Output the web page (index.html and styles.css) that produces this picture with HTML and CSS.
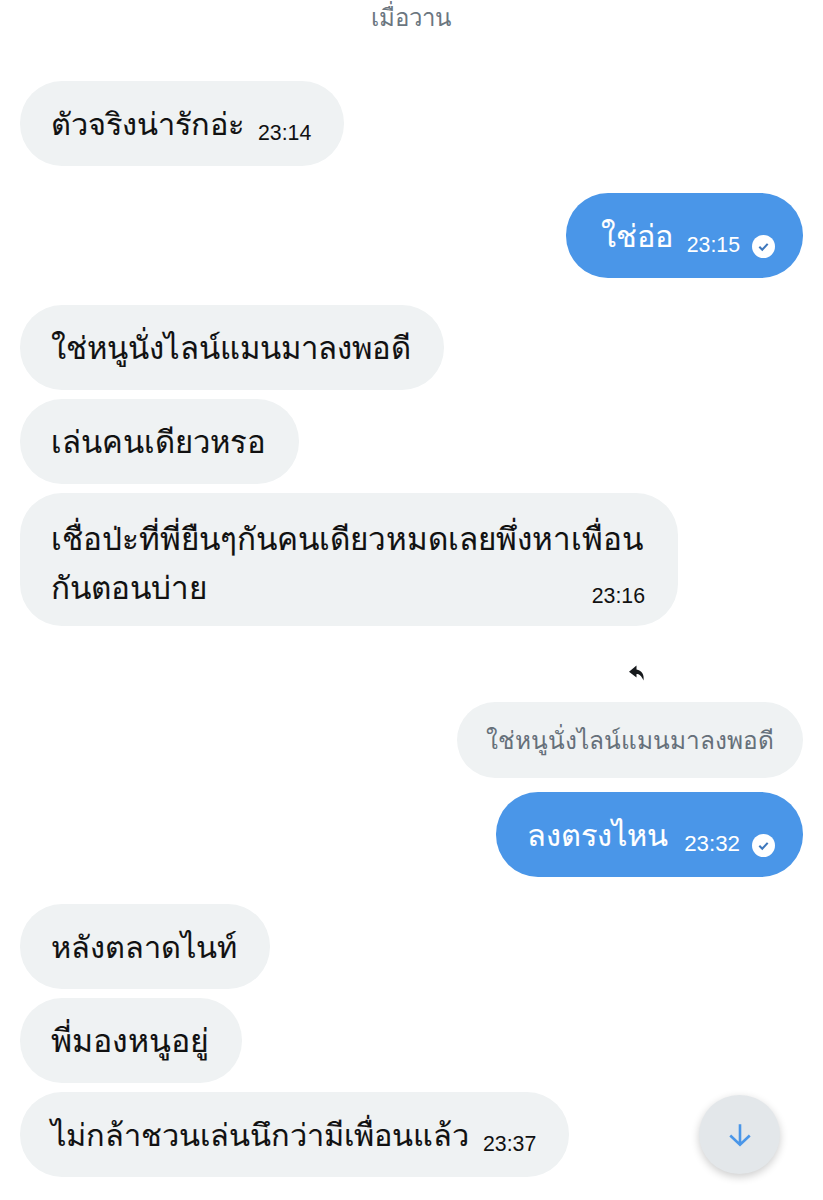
FILE: index.html
```html
<!DOCTYPE html>
<html lang="th">

<head>
    <meta charset="UTF-8">
    <meta name="viewport" content="width=device-width, initial-scale=1.0">
    <title>แชท</title>
    <link rel="stylesheet" href="styles.css">
</head>

<body>

    <div class="chat">
        <div class="day-label">เมื่อวาน</div>

        <div class="group">
            <div class="bubble in">
                <span class="text">ตัวจริงน่ารักอ่ะ</span>
                <span class="time">23:14</span>
            </div>
        </div>

        <div class="group">
            <div class="bubble out short">
                <span class="text">ใช่อ่อ</span>
                <span class="time">23:15</span>
                <svg class="tick" viewBox="0 0 22 22"><circle cx="11" cy="11" r="11" fill="#fff"/><path d="M7 11.3l2.8 2.8 5.2-5.6" fill="none" stroke="#3f78bd" stroke-width="2"/></svg>
            </div>
        </div>

        <div class="group">
            <div class="bubble in">
                <span class="text text-lg">ใช่หนูนั่งไลน์แมนมาลงพอดี</span>
            </div>
            <div class="bubble in">
                <span class="text text-lg">เล่นคนเดียวหรอ</span>
            </div>
            <div class="bubble in wrap">
                <div class="text">เชื่อป่ะที่พี่ยืนๆกันคนเดียวหมดเลยพึ่งหาเพื่อน<br>กันตอนบ่าย</div>
                <div class="time">23:16</div>
            </div>
        </div>

        <div class="reply-mark">
            <svg class="reply-icon" viewBox="0 0 16 16"><path d="M7.5 0.5L0 6.8 7.5 12.5V9c2.8 0 4.8 1.6 7 6.5 1-6-2-10.4-7-11z" fill="#16191c"/></svg>
        </div>

        <div class="group">
            <div class="quote">ใช่หนูนั่งไลน์แมนมาลงพอดี</div>
            <div class="bubble out answer">
                <span class="text">ลงตรงไหน</span>
                <span class="time">23:32</span>
                <svg class="tick" viewBox="0 0 22 22"><circle cx="11" cy="11" r="11" fill="#fff"/><path d="M7 11.3l2.8 2.8 5.2-5.6" fill="none" stroke="#3f78bd" stroke-width="2"/></svg>
            </div>
        </div>

        <div class="group">
            <div class="bubble in">
                <span class="text">หลังตลาดไนท์</span>
            </div>
            <div class="bubble in">
                <span class="text text-xl">พี่มองหนูอยู่</span>
            </div>
            <div class="bubble in">
                <span class="text">ไม่กล้าชวนเล่นนึกว่ามีเพื่อนแล้ว</span>
                <span class="time">23:37</span>
            </div>
        </div>

        <button class="scroll-down">
            <svg viewBox="0 0 24 24"><path d="M12 2v19M3 12.5L12 21l9-8.5" fill="none" stroke="#4a96e8" stroke-width="2.4"/></svg>
        </button>
    </div>

</body>

</html>
```

FILE: styles.css
```css
body {
    margin: 0;
    background-color: #fff;
    font-family: "Noto Sans", "Liberation Sans", sans-serif;
    color: #111;
}

.chat {
    position: relative;
    height: 1200px;
    padding: 0 20px;
    box-sizing: border-box;
    overflow: hidden;
}

.day-label {
    height: 33px;
    line-height: 33px;
    text-align: center;
    font-size: 24px;
    padding-right: 2px;
    color: #6b7680;
}

.group {
    display: flex;
    flex-direction: column;
    gap: 9.5px;
    margin-top: 27.5px;
}

.group:nth-child(2) {
    margin-top: 48px;
}

.bubble {
    display: flex;
    align-items: center;
    align-self: flex-start;
    box-sizing: border-box;
    height: 84.5px;
    padding: 0 33px 0 31px;
    border-radius: 42px;
    background-color: #eff2f3;
    font-size: 30.7px;
}

.bubble .text {
    padding-top: 3px;
    -webkit-text-stroke: 0.12px currentColor;
}

.bubble .text-lg {
    padding-top: 1px;
    font-size: 31px;
}

.bubble .text-xl {
    padding-top: 1px;
    font-size: 32px;
}

.bubble.out {
    align-self: flex-end;
    background-color: #4a96e8;
    color: #fff;
    padding: 0 28px 0 31px;
}

.bubble.short {
    padding-left: 35px;
}

.bubble.wrap {
    display: block;
    width: 658px;
    height: 133px;
    padding-top: 17px;
    font-size: 31.4px;
}

.wrap .text {
    line-height: 49px;
    white-space: nowrap;
}

.wrap .time {
    margin: -27px 0 0;
    text-align: right;
}

.time {
    align-self: flex-end;
    margin: 0 0 20px 14px;
    font-family: "Liberation Sans", sans-serif;
    font-size: 21.3px;
}

.answer .time {
    margin-left: 16px;
    font-size: 22.3px;
}

.tick {
    align-self: flex-end;
    width: 23px;
    height: 23px;
    margin: 0 0 20px 12px;
}

.reply-mark {
    display: flex;
    justify-content: flex-end;
    height: 18px;
    margin-top: 39px;
    padding-right: 158px;
}

.reply-icon {
    width: 16px;
    height: 16px;
}

.group:has(.quote) {
    margin-top: 19px;
    gap: 14px;
}

.quote {
    align-self: flex-end;
    box-sizing: border-box;
    height: 76px;
    line-height: 76px;
    padding: 0 29px;
    border-radius: 38px;
    background-color: #eff2f3;
    color: #66707a;
    font-size: 24.4px;
}

.scroll-down {
    position: absolute;
    left: 699px;
    top: 1095px;
    display: flex;
    align-items: center;
    justify-content: center;
    width: 81px;
    height: 79px;
    padding: 0;
    border: none;
    border-radius: 50%;
    background-color: #e3e7ea;
    box-shadow: 0 3px 8px rgba(0, 0, 0, 0.2);
}

.scroll-down svg {
    width: 26px;
    height: 26px;
}
```
